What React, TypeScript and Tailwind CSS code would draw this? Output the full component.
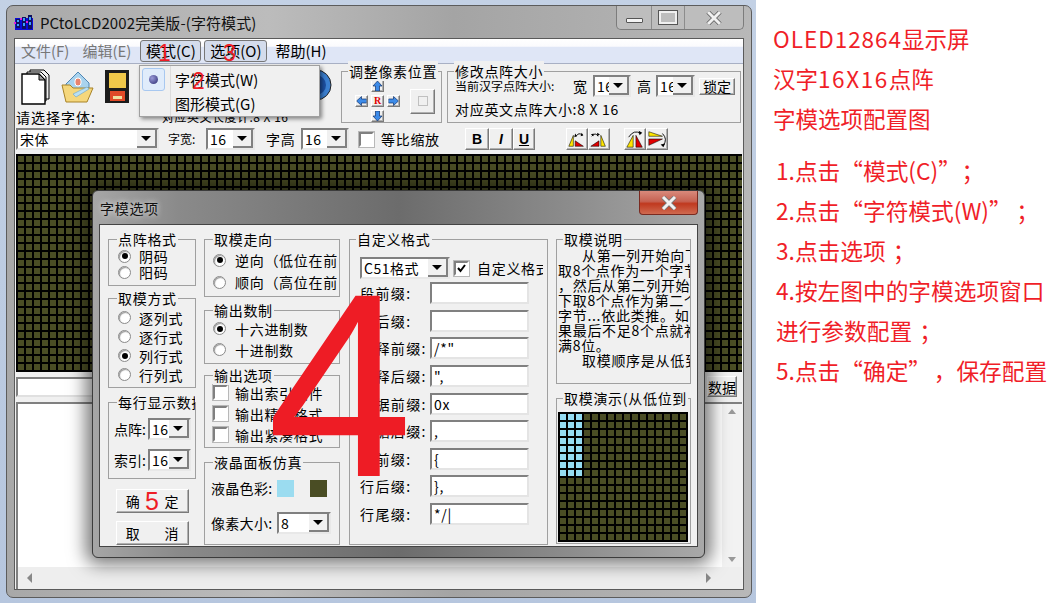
import React from "react";

const FONT = "font-['Noto_Sans_CJK_SC','Noto_Sans',sans-serif]";

function Group({ title, near, className = "", children }: { title: string; near?: boolean; className?: string; children?: React.ReactNode }) {
  return (
    <div className={"relative border border-[#a0a0a0] shrink-0 " + className}>
      <span className={"absolute -top-[11px] max-w-[calc(100%-8px)] overflow-hidden whitespace-nowrap bg-[#f0f0f0] px-px text-[14px] leading-[20px] tracking-[0.7px] text-black " + (near ? "left-[6px]" : "left-[8px]")}>
        {title}
      </span>
      {children}
    </div>
  );
}

function Radio({ on }: { on?: boolean }) {
  return (
    <span className="flex h-[13px] w-[13px] shrink-0 items-center justify-center rounded-full border border-[#8a8a8a] bg-white shadow-[inset_1px_1px_1px_#999]">
      {on && <span className="h-[6px] w-[6px] rounded-full bg-black" />}
    </span>
  );
}

function Check({ on }: { on?: boolean }) {
  return (
    <span className="flex h-[15px] w-[15px] shrink-0 items-center justify-center border-2 border-b-white border-l-[#808080] border-r-white border-t-[#808080] bg-white outline outline-1 outline-[#b8b8b8]">
      {on && (
        <svg width="11" height="11" viewBox="0 0 11 11">
          <path d="M2 5l2.5 3L9 2" fill="none" stroke="#000" strokeWidth="2" />
        </svg>
      )}
    </span>
  );
}

function Sel({ value, className = "" }: { value: string; className?: string }) {
  return (
    <div className={"flex h-[22px] shrink-0 items-stretch overflow-hidden border-2 border-b-[#e8e8e8] border-l-[#808080] border-r-[#e8e8e8] border-t-[#808080] bg-white " + className}>
      <span className="flex-1 overflow-hidden whitespace-nowrap pl-[2px] text-[14px] leading-[18px] tracking-[0.5px]">{value}</span>
      <span className="flex w-[20px] shrink-0 items-center justify-center border-b-2 border-r-2 border-b-[#808080] border-r-[#808080] bg-[#f0f0f0]">
        <span className="h-0 w-0 border-x-[5px] border-t-[5px] border-x-transparent border-t-black" />
      </span>
    </div>
  );
}

function Btn({ children, className = "" }: { children?: React.ReactNode; className?: string }) {
  return (
    <div className={"flex shrink-0 items-center justify-center border border-b-[#7a7a7a] border-l-white border-r-[#7a7a7a] border-t-white bg-[#f0f0f0] shadow-[inset_-1px_-1px_0_#b0b0b0] " + className}>
      {children}
    </div>
  );
}

function Arrow({ rot }: { rot: number }) {
  return (
    <Btn className="h-[12px] w-[13px]">
      <svg width="11" height="10" viewBox="0 0 11 10" style={{ transform: `rotate(${rot}deg)` }}>
        <path d="M5.5 0L10 5H7.5V10H3.5V5H1z" fill="#3d8be8" stroke="#10306a" strokeWidth="0.7" />
      </svg>
    </Btn>
  );
}

function Flip({ kind }: { kind: number }) {
  const shapes: Record<number, React.ReactNode> = {
    0: (
      <>
        <path d="M2 18L7 6V18z" fill="#ffe600" stroke="#000" strokeWidth="0.6" />
        <path d="M9 18V12L18 18z" fill="#e00000" stroke="#000" strokeWidth="0.6" />
        <path d="M10 7Q13 2 17 6" fill="none" stroke="#000" />
        <path d="M9 4l2 3-3 1zM16 3l2 3-3 1z" fill="#000" />
      </>
    ),
    1: (
      <>
        <path d="M2 18L11 12V18z" fill="#e00000" stroke="#000" strokeWidth="0.6" />
        <path d="M13 18V6L18 18z" fill="#ffe600" stroke="#000" strokeWidth="0.6" />
        <path d="M3 7Q7 2 10 7" fill="none" stroke="#000" />
        <path d="M2 5l3-1 0 3zM9 3l3 2-3 2z" fill="#000" />
      </>
    ),
    2: (
      <>
        <path d="M2 19L9 6V19z" fill="#ffe600" stroke="#000" strokeWidth="0.6" />
        <path d="M12 19V6L19 19z" fill="#e00000" stroke="#000" strokeWidth="0.6" />
        <path d="M4 8Q10 -1 17 4" fill="none" stroke="#000" />
        <path d="M15 1l4 2-3 3z" fill="#000" />
      </>
    ),
    3: (
      <>
        <path d="M2 2L17 7H2z" fill="#ffe600" stroke="#000" strokeWidth="0.6" />
        <path d="M2 10H17L2 17z" fill="#e00000" stroke="#000" strokeWidth="0.6" />
        <path d="M17 4Q23 10 18 17" fill="none" stroke="#000" />
        <path d="M15 16l5-1-2 4z" fill="#000" />
      </>
    ),
  };
  return (
    <Btn className="h-[22px] w-[22px]">
      <svg width="20" height="20" viewBox="0 0 22 20">
        {shapes[kind]}
      </svg>
    </Btn>
  );
}

const PIXELS = Array.from({ length: 256 }, (_, i) => i);

const NOTE: [string, boolean][] = [
  ["从第一列开始向下每", true],
  ["取8个点作为一个字节", false],
  ["，然后从第二列开始向", false],
  ["下取8个点作为第二个", false],
  ["字节...依此类推。如", false],
  ["果最后不足8个点就补", false],
  ["满8位。", false],
  ["取模顺序是从低到高", true],
];

const ROWS: [string, string][] = [
  ["段前缀:", ""],
  ["段后缀:", ""],
  ["注释前缀:", "/*\""],
  ["注释后缀:", "\","],
  ["数据前缀:", "0x"],
  ["数据后缀:", ","],
  ["行前缀:", "{"],
  ["行后缀:", "},"],
  ["行尾缀:", "*/|"],
];

function Dialog() {
  return (
    <div className="absolute left-[92px] top-[190px] flex h-[368px] w-[613px] flex-col rounded-[6px] border border-[#3c3c3c] bg-[#6e6e6e] bg-[linear-gradient(to_right,#a6a6a6_0,#8a8a8a_14%,#6c6c6c_50%,#8c8c8c_78%,#a8a8a8_100%)] px-[6px] pb-[10px] shadow-[0_0_18px_6px_rgba(0,0,0,0.55)]">
      <div className="flex h-[33px] shrink-0 items-start justify-between">
        <span className="pl-px pt-[7px] text-[14px] leading-[20px] tracking-[0.7px] text-[#111] [text-shadow:0_0_6px_#fff]">字模选项</span>
        <div className="flex h-[24px] w-[59px] items-center justify-center rounded-b-[4px] border border-t-0 border-[#7a2a20] bg-[linear-gradient(to_bottom,#d98a7c_0,#c66252_45%,#c0391f_55%,#cf6a50_100%)]">
          <svg width="16" height="14" viewBox="0 0 16 14">
            <path d="M2 1L14 13M14 1L2 13" stroke="#777" strokeWidth="4.6" />
            <path d="M2 1L14 13M14 1L2 13" stroke="#f2f2f2" strokeWidth="3" />
          </svg>
        </div>
      </div>
      <div className="flex flex-1 gap-[8px] border border-[#444] bg-[#f0f0f0] pl-[8px] pt-[14px] text-[14px] leading-[20px] tracking-[0.7px] text-black">
        <div className="flex w-[88px] shrink-0 flex-col">
          <Group title="点阵格式" className="h-[47px] pt-[8px]">
            {["阴码", "阳码"].map((t, i) => (
              <div key={t} className="flex h-[16px] items-center gap-[8px] pl-[9px]">
                <Radio on={i === 0} />
                <span>{t}</span>
              </div>
            ))}
          </Group>
          <Group title="取模方式" className="mt-[12px] h-[90px] pt-[9px]">
            {["逐列式", "逐行式", "列行式", "行列式"].map((t, i) => (
              <div key={t} className="flex h-[19px] items-center gap-[8px] pl-[9px]">
                <Radio on={i === 2} />
                <span>{t}</span>
              </div>
            ))}
          </Group>
          <Group title="每行显示数据" className="mt-[14px] h-[77px] pt-[15px]">
            <div className="flex items-center pl-[5px]">
              <span className="w-[34px] whitespace-nowrap tracking-normal">点阵:</span>
              <Sel value="16" className="w-[43px]" />
            </div>
            <div className="mt-[9px] flex items-center pl-[5px]">
              <span className="w-[34px] whitespace-nowrap tracking-normal">索引:</span>
              <Sel value="16" className="w-[43px]" />
            </div>
          </Group>
          <Btn className="ml-[8px] mt-[10px] h-[24px] w-[73px] gap-[24px]">
            <span>确</span>
            <span>定</span>
          </Btn>
          <Btn className="ml-[8px] mt-[8px] h-[24px] w-[73px] gap-[24px]">
            <span>取</span>
            <span>消</span>
          </Btn>
        </div>

        <div className="flex w-[136px] shrink-0 flex-col">
          <Group title="取模走向" className="h-[58px] pt-[9px]">
            {["逆向（低位在前）", "顺向（高位在前）"].map((t, i) => (
              <div key={t} className="flex h-[22px] items-center gap-[9px] pl-[8px]">
                <Radio on={i === 0} />
                <span className="w-[102px] overflow-hidden whitespace-nowrap">{t}</span>
              </div>
            ))}
          </Group>
          <Group title="输出数制" className="mt-[13px] h-[54px] pt-[7px]">
            {["十六进制数", "十进制数"].map((t, i) => (
              <div key={t} className="flex h-[21px] items-center gap-[9px] pl-[8px]">
                <Radio on={i === 0} />
                <span>{t}</span>
              </div>
            ))}
          </Group>
          <Group title="输出选项" className="mt-[11px] h-[73px] pt-[6px]">
            {["输出索引文件", "输出精简格式", "输出紧凑格式"].map((t) => (
              <div key={t} className="flex h-[21px] items-center gap-[7px] pl-[8px]">
                <Check />
                <span className="w-[88px] overflow-hidden whitespace-nowrap">{t}</span>
              </div>
            ))}
          </Group>
          <Group title="液晶面板仿真" className="mt-[14px] h-[83px] pt-[15px]">
            <div className="flex items-center pl-[6px]">
              <span className="w-[66px] whitespace-nowrap tracking-[0.3px]">液晶色彩:</span>
              <span className="h-[17px] w-[17px] bg-[#9bdcf0]" />
              <span className="ml-[16px] h-[17px] w-[17px] bg-[#4a4d24]" />
            </div>
            <div className="mt-[14px] flex items-center pl-[6px]">
              <span className="w-[66px] whitespace-nowrap tracking-[0.3px]">像素大小:</span>
              <Sel value="8" className="w-[54px]" />
            </div>
          </Group>
        </div>

        <Group title="自定义格式" near className="ml-px h-[306px] w-[199px]">
          <div className="flex items-center pl-[10px] pt-[17px]">
            <Sel value="C51格式" className="w-[90px]" />
            <span className="ml-[4px]"><Check on /></span>
            <span className="ml-[8px] w-[66px] overflow-hidden whitespace-nowrap">自定义格式</span>
          </div>
          <div className="mt-[3px] flex h-[243px] flex-col justify-between pl-[10px]">
            {ROWS.map(([label, val]) => (
              <div key={label} className="flex items-center">
                <span className="w-[70px] whitespace-nowrap tracking-[1.4px]">{label}</span>
                <span className="flex h-[22px] w-[99px] items-center border-2 border-b-[#e4e4e4] border-l-[#808080] border-r-[#e4e4e4] border-t-[#808080] bg-white pl-[2px] text-[14px]">{val}</span>
              </div>
            ))}
          </div>
        </Group>

        <div className="flex w-[135px] shrink-0 flex-col">
          <Group title="取模说明" near className="h-[145px] pt-[8px]">
            {NOTE.map(([l, indent], i) => (
              <div key={i} className={"h-[15px] overflow-hidden whitespace-nowrap text-[14px] leading-[15px] tracking-[0.7px] " + (indent ? "pl-[25px]" : "pl-[1px]")}>{l}</div>
            ))}
          </Group>
          <Group title="取模演示(从低位到" near className="mt-[14px] h-[146px] pl-[1px] pt-[13px]">
            <div className="grid h-[130px] w-[130px] grid-cols-[repeat(16,8px)] grid-rows-[repeat(16,8px)] bg-black">
              {PIXELS.map((i) => (
                <span
                  key={i}
                  className={"ml-[2px] mt-[2px] h-[6px] w-[6px] " + (i % 16 < 3 && i < 128 ? "bg-[#95dcf2]" : "bg-[#4a4d24]")}
                />
              ))}
            </div>
          </Group>
        </div>
      </div>
    </div>
  );
}

function Logo() {
  return (
    <svg width="20" height="18" viewBox="0 0 20 18" shapeRendering="crispEdges">
      <rect x="1" y="4" width="18" height="12" fill="#0a0ad8" />
      <path d="M2 5h4v9H2zM8 3h4v12H8zM14 1h4v14h-4z" fill="#101060" />
      <path d="M3 6h2v2H3zM3 10h2v2H3zM9 4h2v3H9zM9 9h2v3H9zM15 3h2v3h-2zM15 8h2v3h-2z" fill="#3aa0ff" />
      <path d="M6 4h2v2H6zM12 7h2v2h-2zM0 8h2v2H0z" fill="#e020e0" />
    </svg>
  );
}

export default function App() {
  return (
    <div className={"relative flex h-[603px] w-[1059px] overflow-hidden bg-white text-black " + FONT}>
      <div className="h-full w-[756px] shrink-0 bg-[linear-gradient(to_bottom,#c3d1e5,#b6c6de)] pl-[6px] pt-[5px]">
        <div className="flex h-[593px] w-[746px] flex-col rounded-[7px] border border-[#5c5c5c] bg-[linear-gradient(to_right,#a8a8a8_0,#bcbcbc_35%,#a4a4a4_60%,#b8b8b8_100%)] px-[7px] pb-[7px]">
          <div className="flex h-[32px] shrink-0 items-start">
            <div className="mt-[6px] flex items-center gap-[6px]">
              <Logo />
              <span className="whitespace-nowrap text-[15px] leading-[22px] tracking-[0.1px] text-[#111]">PCtoLCD2002完美版-(字符模式)</span>
            </div>
            <div className="ml-auto flex h-[24px] items-stretch rounded-b-[5px] border border-t-0 border-[#7c7c7c] bg-[#bdbdbd]">
              <span className="flex w-[35px] items-center justify-center border-r border-[#8c8c8c]">
                <span className="mt-[6px] h-[5px] w-[17px] rounded-[1px] border border-[#555] bg-[#f4f4f4]" />
              </span>
              <span className="flex w-[33px] items-center justify-center border-r border-[#8c8c8c]">
                <span className="h-[13px] w-[18px] border-2 border-[#f0f0f0] outline outline-1 outline-[#555]" />
              </span>
              <span className="flex w-[58px] items-center justify-center">
                <svg width="16" height="14" viewBox="0 0 16 14">
                  <path d="M2 1L14 13M14 1L2 13" stroke="#555" strokeWidth="4.4" />
                  <path d="M2 1L14 13M14 1L2 13" stroke="#f0f0f0" strokeWidth="3" />
                </svg>
              </span>
            </div>
          </div>

          <div className="flex min-h-0 flex-1 flex-col border border-[#5a5a5a] bg-[#f0f0f0]">
            <div className="flex h-[25px] shrink-0 items-center border-b border-[#a8b0c4] bg-[linear-gradient(to_bottom,#ffffff_0,#fbfbfd_30%,#dfe6f6_35%,#dfe6f6_100%)] pl-[6px] text-[15px]">
              <span className="text-[#777]">文件(F)</span>
              <span className="ml-[13px] text-[#777]">编辑(E)</span>
              <span className="ml-[9px] flex h-[22px] w-[61px] items-center justify-center rounded-[3px] border border-[#777] bg-[#d4dcec]">模式(C)</span>
              <span className="ml-[3px] flex h-[22px] w-[63px] items-center justify-center rounded-[3px] border border-[#777] bg-[#d4dcec]">选项(O)</span>
              <span className="ml-[8px]">帮助(H)</span>
            </div>

            <div className="flex h-[90px] shrink-0 flex-col">
              <div className="flex h-[60px] shrink-0">
                <div className="flex w-[326px] shrink-0 flex-col pl-[1px]">
                  <div className="flex h-[46px] items-center pl-[5px]">
                    <svg width="30" height="36" viewBox="0 0 30 36">
                      <path d="M9 1h14l5 5v24H9z" fill="#eee" stroke="#000" />
                      <path d="M6 3h14l5 5v24H6z" fill="#f6f6f6" stroke="#000" />
                      <path d="M1 5h17l6 6v24H1z" fill="#fff" stroke="#000" strokeWidth="1.4" />
                      <path d="M18 5l6 6h-6z" fill="#999" stroke="#000" />
                    </svg>
                    <svg className="ml-[9px]" width="34" height="34" viewBox="0 0 34 34">
                      <path d="M6 14L18 2L29 13V22H6z" fill="#a9d3ee" stroke="#4f86b4" />
                      <rect x="15" y="8" width="6" height="8" rx="3" fill="#e8846e" stroke="#fff" />
                      <path d="M2 15h8l3 3h20l-6 14H6z" fill="#f5d77c" stroke="#a88328" />
                      <path d="M13 24l14-7 2 2-13 8z" fill="#b9e0f5" stroke="#6ba3c8" strokeWidth="0.6" />
                    </svg>
                    <svg className="ml-[10px]" width="26" height="34" viewBox="0 0 26 34">
                      <rect x="1" y="0" width="24" height="33" fill="#1c1c1c" />
                      <rect x="5" y="3" width="17" height="15" fill="#f0c84a" />
                      <rect x="6" y="21" width="15" height="10" fill="#e04a28" />
                      <rect x="9" y="26" width="9" height="3" fill="#f0e0a0" />
                    </svg>
                  </div>
                  <div className="flex h-[13px] items-center">
                    <span className="text-[14px] leading-[14px] tracking-[1px]">请选择字体:</span>
                    <span className="ml-[66px] whitespace-nowrap text-[12px] leading-[14px] tracking-[0.5px]">对应英文长度计:8 X 16</span>
                  </div>
                </div>
                <Group title="调整像素位置" near className="mt-[7px] h-[52px] w-[101px]">
                  <div className="flex items-center pl-[13px] pt-[8px]">
                    <div className="grid w-[45px] grid-cols-[13px_13px_13px] gap-x-[3px] gap-y-[3px]">
                      <span />
                      <Arrow rot={0} />
                      <span />
                      <Arrow rot={-90} />
                      <Btn className="h-[12px] w-[13px]">
                        <span className="font-['Liberation_Serif',serif] text-[10px] font-bold leading-none text-[#e00000]">R</span>
                      </Btn>
                      <Arrow rot={90} />
                      <span />
                      <Arrow rot={180} />
                      <span />
                    </div>
                    <Btn className="ml-[10px] h-[25px] w-[25px]">
                      <span className="h-[10px] w-[10px] border border-[#c0c0c0]" />
                    </Btn>
                  </div>
                </Group>
                <Group title="修改点阵大小" near className="ml-[5px] mt-[7px] h-[52px] w-[294px]">
                  <div className="flex items-center pl-[7px] pt-[3px] text-[13px]">
                    <span className="w-[118px] whitespace-nowrap text-[12px] leading-[16px]">当前汉字点阵大小:</span>
                    <span className="text-[14px]">宽</span>
                    <Sel value="16" className="ml-[6px] w-[38px]" />
                    <span className="ml-[6px] text-[14px]">高</span>
                    <Sel value="16" className="ml-[5px] w-[39px]" />
                    <Btn className="ml-[4px] h-[17px] w-[36px] text-[14px] leading-none">锁定</Btn>
                  </div>
                  <div className="whitespace-nowrap pl-[7px] pt-[3px] text-[14px] leading-[18px] tracking-[0.7px]">对应英文点阵大小:8 X 16</div>
                </Group>
              </div>
              <div className="mt-[4px] flex h-[22px] shrink-0 items-center pl-[1px] text-[14px]">
                <Sel value="宋体" className="w-[143px]" />
                <span className="ml-[9px] w-[38px] text-[12px]">字宽:</span>
                <Sel value="16" className="w-[49px]" />
                <span className="ml-[11px] w-[35px] tracking-[0.7px]">字高</span>
                <Sel value="16" className="w-[48px]" />
                <span className="ml-[10px]"><Check /></span>
                <span className="ml-[7px] w-[61px] whitespace-nowrap tracking-[0.7px]">等比缩放</span>
                <Btn className="ml-[23px] h-[22px] w-[24px] font-['Liberation_Sans',sans-serif] text-[14px] font-bold">B</Btn>
                <Btn className="h-[22px] w-[24px] font-['Liberation_Sans',sans-serif] text-[14px] font-bold italic">I</Btn>
                <Btn className="h-[22px] w-[22px] font-['Liberation_Sans',sans-serif] text-[14px] font-bold underline">U</Btn>
                <span className="ml-[31px]"><Flip kind={0} /></span>
                <Flip kind={1} />
                <span className="ml-[14px]"><Flip kind={2} /></span>
                <Flip kind={3} />
              </div>
            </div>

            <div className="mx-px h-[218px] shrink-0 bg-[#4a4d24] bg-[linear-gradient(to_right,#000_2px,transparent_2px),linear-gradient(to_bottom,#000_2px,transparent_2px)] bg-[size:8px_8px]" />

            <div className="flex h-[25px] shrink-0 items-end pl-px pr-[6px] pt-[5px]">
              <div className="h-[20px] flex-1 border-2 border-b-[#e0e0e0] border-l-[#808080] border-r-[#e0e0e0] border-t-[#808080] bg-white" />
              <Btn className="ml-[4px] h-[21px] w-[30px] text-[14px] leading-none">数据</Btn>
            </div>

            <div className="mx-px mt-[5px] flex min-h-0 flex-1 flex-col border-l-2 border-t-2 border-l-[#808080] border-t-[#808080] bg-white">
              <div className="flex min-h-0 flex-1">
                <div className="flex-1" />
                <div className="flex w-[20px] flex-col items-center justify-between bg-[#f2f2f2] py-[5px]">
                  <span className="h-0 w-0 border-x-[4px] border-b-[5px] border-x-transparent border-b-[#999]" />
                  <span className="h-0 w-0 border-x-[4px] border-t-[5px] border-x-transparent border-t-[#999]" />
                </div>
              </div>
              <div className="flex h-[22px] shrink-0 items-center justify-between bg-[#eeeeee] pl-[9px] pr-[31px]">
                <span className="h-0 w-0 border-y-[5px] border-r-[5px] border-y-transparent border-r-[#888]" />
                <span className="h-0 w-0 border-y-[5px] border-l-[5px] border-y-transparent border-l-[#888]" />
              </div>
            </div>
          </div>
        </div>
      </div>

      <div className="flex-1 pl-[17px] pt-[18px] text-[22.5px] leading-[40px] text-[#f01e28]">
        <div><span className="tracking-[1px]">OLED12864</span>显示屏</div>
        <div><span>汉字</span><span className="tracking-[1.6px]">16X16</span><span>点阵</span></div>
        <div>字模选项配置图</div>
        <div className="mt-[13px] whitespace-nowrap pl-[3px] text-[22.7px]">
          <div>1.点击“模式(C)”<span className="ml-[12px]">；</span></div>
          <div>2.点击“字符模式(W)”<span className="ml-[16px]">；</span></div>
          <div>3.点击选项<span className="ml-[7px]">；</span></div>
          <div>4.按左图中的字模选项窗口</div>
          <div>进行参数配置<span className="ml-[7px]">；</span></div>
          <div>5.点击“确定”<span className="ml-[14px]">，</span>保存配置</div>
        </div>
      </div>

      {/* blue round toolbar button peeking out from behind the menu */}
      <svg className="absolute left-[300px] top-[68px]" width="34" height="34" viewBox="0 0 34 34">
        <circle cx="16" cy="17" r="15" fill="#3b7fd0" stroke="#222" />
        <circle cx="16" cy="17" r="10" fill="#1d4fa0" />
      </svg>

      {/* open menu */}
      <div className="absolute left-[139px] top-[65px] h-[52px] w-[181px] border border-[#a0a0a0] bg-[#f0f0f0] text-[15px] shadow-[2px_2px_4px_rgba(0,0,0,0.45)]">
        <span className="absolute left-[2px] top-[2px] flex h-[23px] w-[23px] items-center justify-center rounded-[3px] border border-[#a8c8f0] bg-[#e0ecfb]">
          <span className="h-[9px] w-[9px] rounded-full bg-[radial-gradient(circle_at_35%_35%,#9a9ad8,#2a2a70)]" />
        </span>
        <span className="absolute left-[30px] top-0 h-full w-px bg-[#dcdcdc]" />
        <div className="pl-[35px] pt-[2px] leading-[24px]">字符模式(W)</div>
        <div className="pl-[35px] leading-[24px]">图形模式(G)</div>
      </div>

      <Dialog />

      {/* red annotations painted over the screenshot */}
      <span className="absolute left-[158px] top-[40px] font-['Liberation_Sans',sans-serif] text-[23px] leading-[26px] text-[#ee1c25]">1</span>
      <span className="absolute left-[192px] top-[68px] font-['Liberation_Sans',sans-serif] text-[23px] leading-[26px] text-[#ee1c25]">2</span>
      <span className="absolute left-[223px] top-[40px] font-['Liberation_Sans',sans-serif] text-[23px] leading-[26px] text-[#ee1c25]">3</span>
      <span className="absolute left-[145px] top-[487px] font-['Liberation_Sans',sans-serif] text-[25px] leading-[28px] text-[#ee1c25]">5</span>
      <span className="pointer-events-none absolute left-[267px] top-[241px] font-['Liberation_Sans',sans-serif] text-[262px] leading-[290px] text-[#ee1c25]">4</span>
    </div>
  );
}
